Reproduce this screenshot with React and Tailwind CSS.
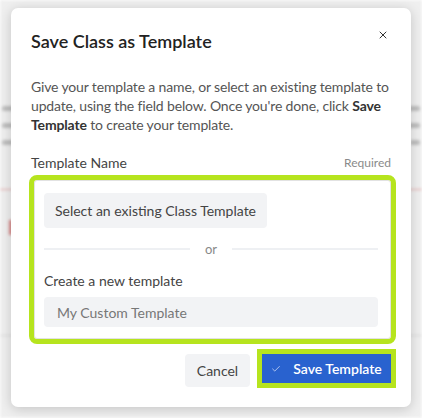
import { X, Check } from "lucide-react";

const font = { fontFamily: "Lato, 'Open Sans', sans-serif" };

function Bar({ className }) {
  return <div className={"h-[5px] rounded-full bg-[#bdbdbd] " + className} />;
}

function Backdrop() {
  return (
    <div className="h-[418px] w-full overflow-hidden bg-[#efefef] blur-[1.5px]">
      <div className="px-[2px] pt-[106px] space-y-[12px]">
        <div className="flex justify-between"><Bar className="w-[60px]" /><Bar className="w-[12px]" /></div>
        <div className="flex justify-between"><Bar className="w-[120px]" /><Bar className="w-[14px]" /></div>
        <div className="flex justify-between"><Bar className="w-[40px]" /><Bar className="w-[10px]" /></div>
      </div>
      <div className="mt-[44px] h-[1px] bg-[#e3a5a5]" />
      <div className="ml-[9px] mt-[30px] h-[15px] w-[10px] bg-[#d98a8a]" />
      <div className="mt-[100px] h-[1px] bg-[#d6d6d6]" />
      <div className="px-[14px] pt-[58px] flex gap-2">
        <Bar className="w-[60px] bg-[#cfcfcf]" />
        <Bar className="w-[200px] bg-[#cfcfcf]" />
      </div>
    </div>
  );
}

export default function App() {
  return (
    <div className="relative h-[418px] w-[422px] overflow-hidden" style={font}>
      <Backdrop />
      <div className="absolute left-[11px] top-[8px] w-[400px] h-[399px] rounded-[7px] bg-white shadow-[0_2px_12px_rgba(0,0,0,0.18)] px-5">
        <div className="flex items-start justify-between pt-[20px]">
          <h2 className="text-[18px] font-semibold leading-[26px] text-[#222]">Save Class as Template</h2>
          <button className="mt-[1px] mr-[2px] text-[#333]">
            <X size={12} strokeWidth={2} />
          </button>
        </div>

        <p className="mt-[23px] text-[14px] leading-[19px] tracking-[-0.15px] text-[#555]">
          <span className="block whitespace-nowrap">Give your template a name, or select an existing template to</span>
          <span className="block whitespace-nowrap">
            update, using the field below. Once you're done, click <b className="font-bold text-[#333]">Save</b>
          </span>
          <span className="block whitespace-nowrap">
            <b className="font-bold text-[#333]">Template</b> to create your template.
          </span>
        </p>

        <div className="mt-[19px] flex items-center justify-between">
          <span className="text-[14px] leading-[19px] text-[#444]">Template Name</span>
          <span className="text-[12px] leading-[19px] text-[#8a8a8a]">Required</span>
        </div>

        <div className="ml-[3px] mt-[8px] h-[159px] rounded-[3px] border border-[#e2e2e2] bg-white outline-[5px] outline-solid outline-[#b6e41e] pl-[9px] pr-[12px] pt-[12px]">
          <button className="h-[35px] w-[223px] rounded-[4px] bg-[#f2f3f5] text-[14px] text-[#444]">
            Select an existing Class Template
          </button>
          <div className="mt-[12px] flex items-center gap-[15px]">
            <div className="h-[2px] flex-1 bg-[#eef0f3]" />
            <span className="text-[13px] leading-[18px] text-[#888]">or</span>
            <div className="h-[2px] flex-1 bg-[#eef0f3]" />
          </div>
          <div className="mt-[13px] text-[14px] leading-[19px] text-[#444]">Create a new template</div>
          <div className="mt-[7px] flex h-[30px] items-center rounded-[4px] bg-[#f2f3f5] px-[13px] text-[14px] text-[#777]">
            My Custom Template
          </div>
        </div>

        <div className="mt-[10px] flex items-start justify-end gap-[7px]">
          <button className="mt-[5px] h-[33px] w-[65px] rounded-[4px] bg-[#f2f3f5] text-[14px] text-[#444]">
            Cancel
          </button>
          <div className="border-[5px] border-[#b6e41e] mr-[-5px]">
            <button className="flex h-[29px] w-[129px] items-center justify-center gap-[12px] bg-[#2962cf] text-[14px] font-semibold text-white">
              <Check size={10} strokeWidth={2} className="text-[#c9d6f3]" />
              Save Template
            </button>
          </div>
        </div>
      </div>
    </div>
  );
}
